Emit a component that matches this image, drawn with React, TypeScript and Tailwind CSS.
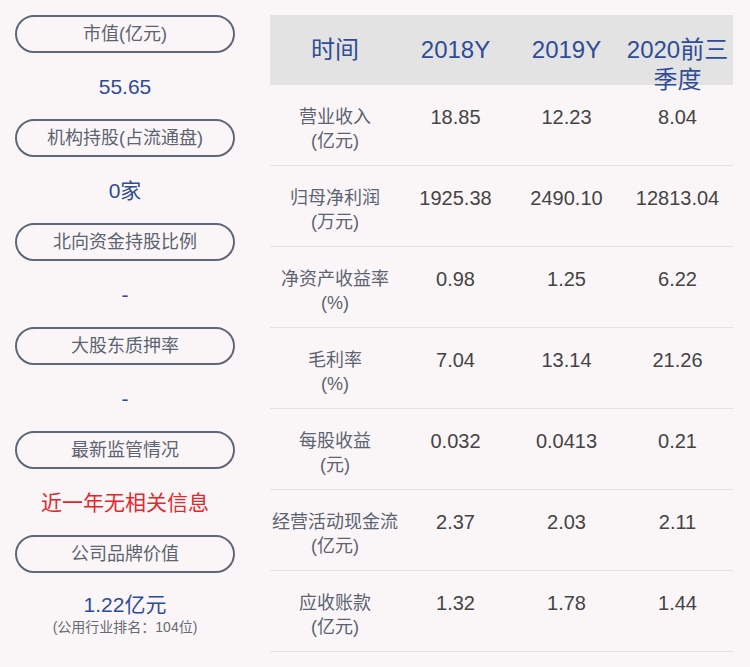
import React from "react";

const font = { fontFamily: '"Liberation Sans", "Noto Sans CJK SC", sans-serif' };

type Block = { label: string; value: React.ReactNode };

const blocks: Block[] = [
  { label: "市值(亿元)", value: <span className="text-[21px] text-[#2f4c96]">55.65</span> },
  { label: "机构持股(占流通盘)", value: <span className="text-[21px] text-[#2f4c96]">0家</span> },
  { label: "北向资金持股比例", value: <span className="text-[21px] text-[#2f4c96]">-</span> },
  { label: "大股东质押率", value: <span className="text-[21px] text-[#2f4c96]">-</span> },
  { label: "最新监管情况", value: <span className="text-[21px] text-[#e5262c]">近一年无相关信息</span> },
];

const rows: [string, string, string, string, string][] = [
  ["营业收入", "(亿元)", "18.85", "12.23", "8.04"],
  ["归母净利润", "(万元)", "1925.38", "2490.10", "12813.04"],
  ["净资产收益率", "(%)", "0.98", "1.25", "6.22"],
  ["毛利率", "(%)", "7.04", "13.14", "21.26"],
  ["每股收益", "(元)", "0.032", "0.0413", "0.21"],
  ["经营活动现金流", "(亿元)", "2.37", "2.03", "2.11"],
  ["应收账款", "(亿元)", "1.32", "1.78", "1.44"],
];

function Pill({ children }: { children: React.ReactNode }) {
  return (
    <div className="h-[38px] w-[220px] rounded-full border-2 border-[#5f6878] flex items-center justify-center text-[18px] text-[#5c6371]">
      {children}
    </div>
  );
}

export default function App() {
  return (
    <div className="w-[750px] h-[667px] bg-[#faf6f7] flex overflow-hidden" style={font}>
      <div className="w-[270px] pl-[15px] pt-[15px] flex flex-col">
        {blocks.map((b) => (
          <div key={b.label} className="flex flex-col">
            <Pill>{b.label}</Pill>
            <div className="w-[220px] h-[66px] flex items-center justify-center leading-none">{b.value}</div>
          </div>
        ))}
        <Pill>公司品牌价值</Pill>
        <div className="w-[220px] flex flex-col items-center pt-[20px]">
          <span className="text-[21px] text-[#2f4c96] leading-[24px]">1.22亿元</span>
          <span className="text-[14px] text-[#666a72] leading-[20px]">(公用行业排名：104位)</span>
        </div>
      </div>
      <div className="w-[463px] pt-[15px] flex flex-col">
        <div className="h-[70px] bg-[#e3e3e3] grid grid-cols-[130px_111px_111px_111px] text-[24px] text-[#2f4c96] leading-[30px] text-center">
          <div className="pt-[20px]">时间</div>
          <div className="pt-[20px]">2018Y</div>
          <div className="pt-[20px]">2019Y</div>
          <div className="pt-[20px] relative z-10">2020前三季度</div>
        </div>
        {rows.map((r) => (
          <div
            key={r[0]}
            className="grid grid-cols-[130px_111px_111px_111px] pt-[20px] pb-[12px] border-b border-[#e5e1e3] text-center"
          >
            <div className="text-[18px] leading-[24px] text-[#5c6371] flex flex-col items-center">
              <span className="whitespace-nowrap">{r[0]}</span>
              <span>{r[1]}</span>
            </div>
            <div className="text-[20px] leading-[24px] text-[#444444]">{r[2]}</div>
            <div className="text-[20px] leading-[24px] text-[#444444]">{r[3]}</div>
            <div className="text-[20px] leading-[24px] text-[#444444]">{r[4]}</div>
          </div>
        ))}
      </div>
    </div>
  );
}
